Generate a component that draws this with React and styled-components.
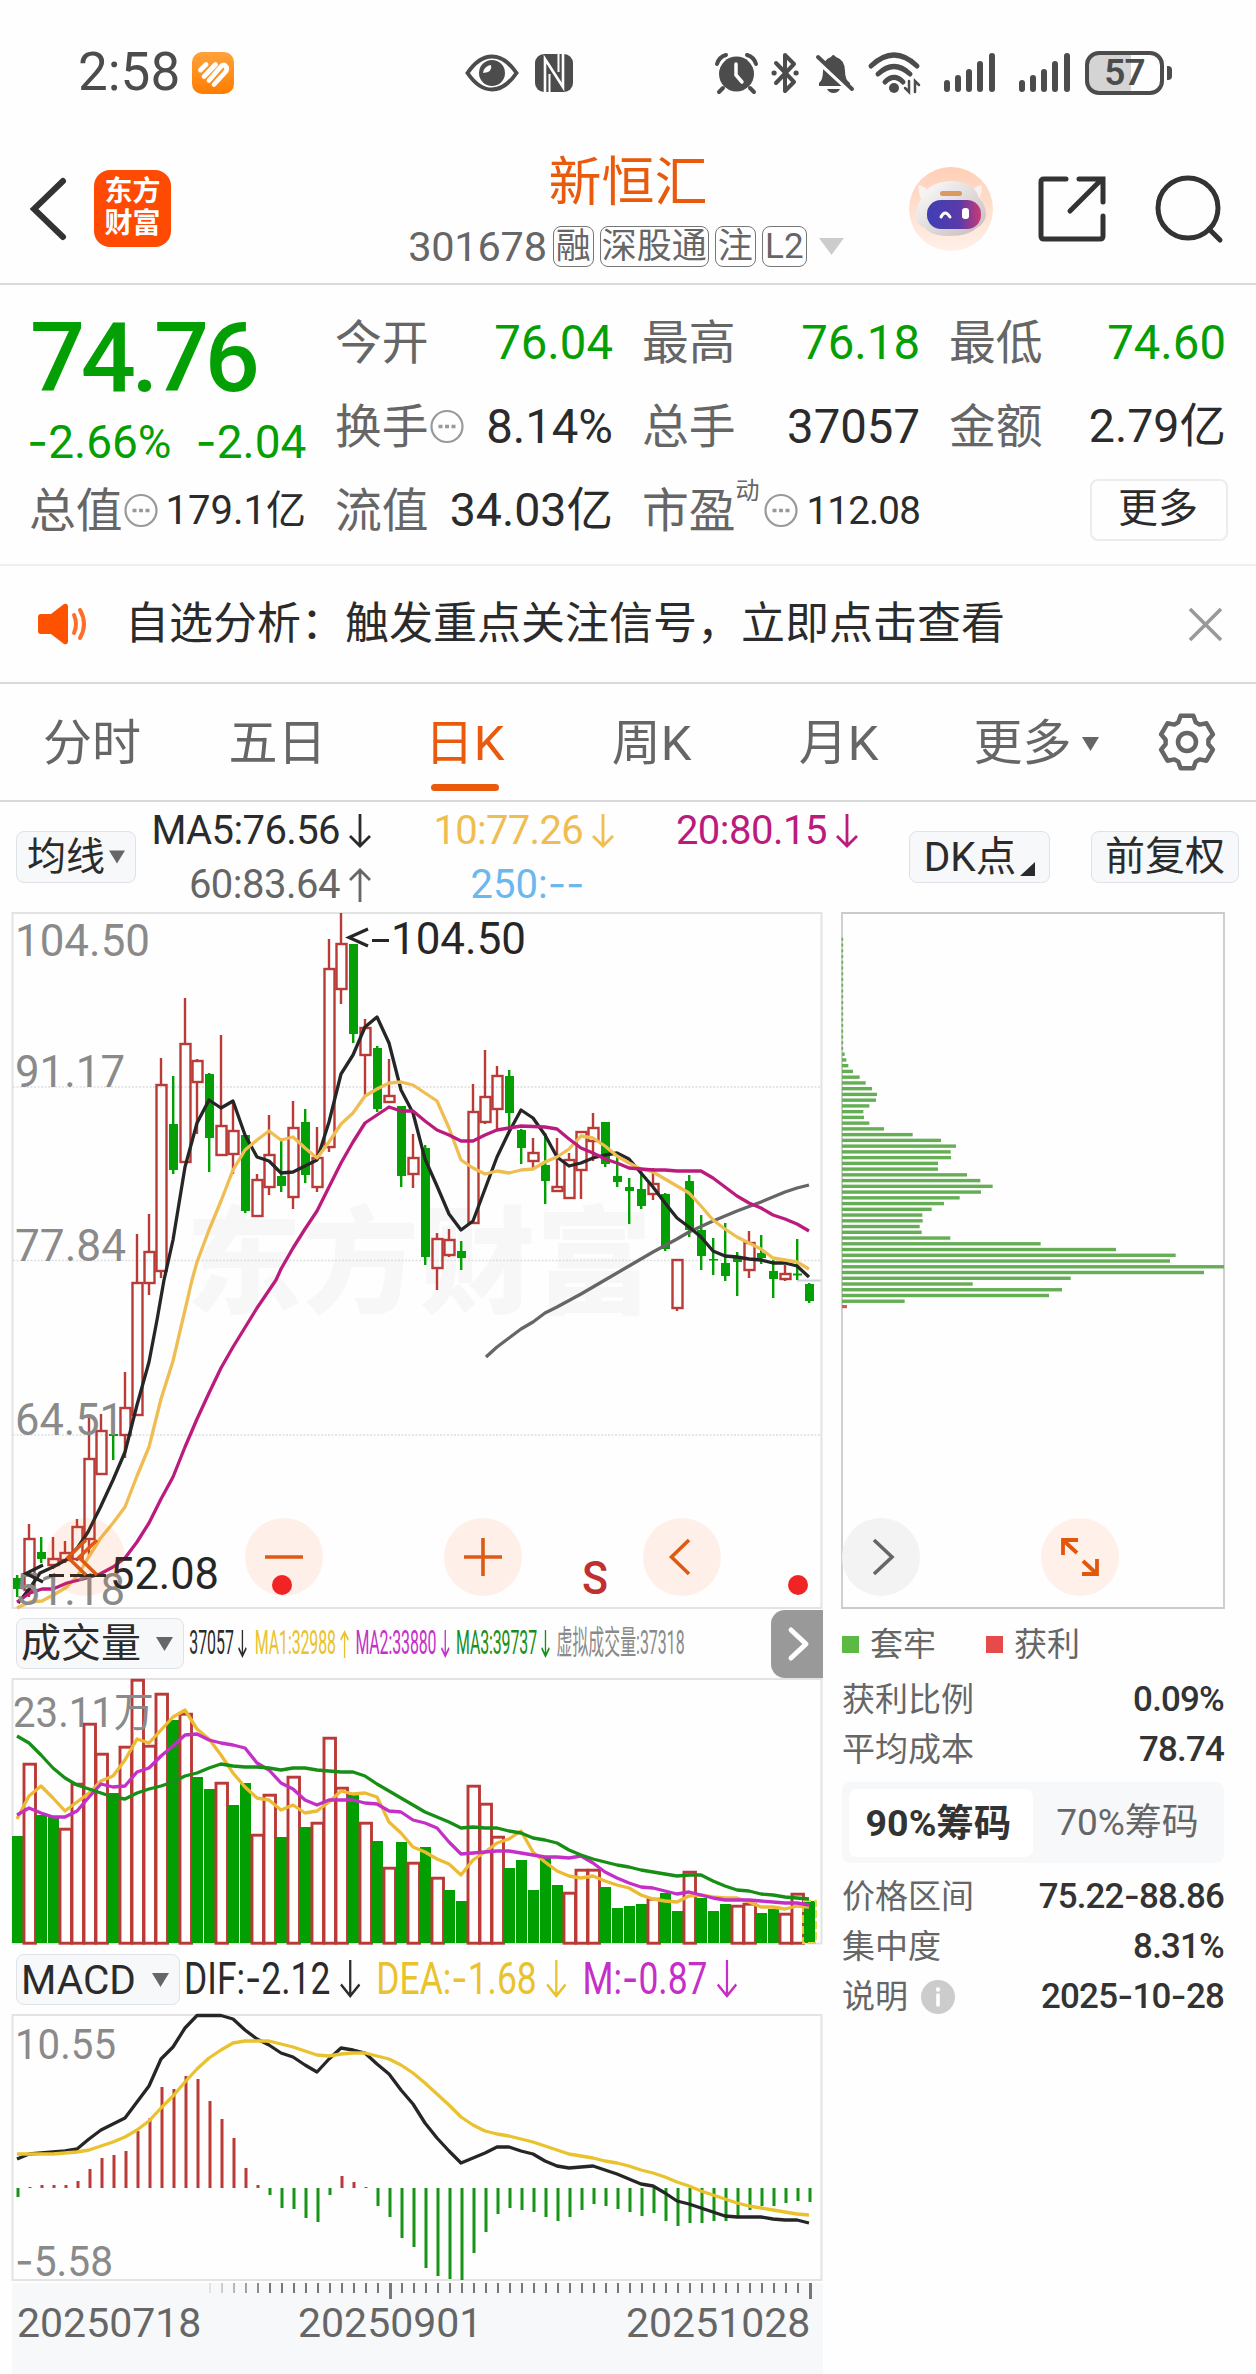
import React from 'react';
import styled, { createGlobalStyle } from 'styled-components';

const C = {
  orange: '#ea5a0c',
  green: '#049f04',
  red: '#b93a36',
  ink: '#2b2b2b',
  grey: '#666666',
  axis: '#8a8a8a',
  line: '#e3e3e3',
  yellow: '#efbd52',
  gold: '#e9c22d',
  magenta: '#bb1b7d',
  violet: '#c42fc8',
  deepGreen: '#178f17',
};
const FONT = 'Roboto, "Noto Sans CJK SC", sans-serif';

const Global = createGlobalStyle`
  html, body { margin: 0; padding: 0; background: #fefefe; }
  * { box-sizing: border-box; }
  body { font-family: ${FONT}; color: ${C.ink}; }
  svg { display: block; flex: none; overflow: visible; }
`;

/* ---------- shared pieces ---------- */
const Screen = styled.div`
  width: 1256px;
  height: 2374px;
  overflow: hidden;
  background: #fefefe;
`;
const Text = styled.span`
  display: block;
  flex: none;
  white-space: nowrap;
  line-height: 1.2;
  font-size: ${(p) => p.$s}px;
  color: ${(p) => p.$c || C.ink};
  font-weight: ${(p) => p.$w || 400};
  letter-spacing: ${(p) => p.$ls || 0}px;
`;
const Dash = styled.span`
  font-family: Inter, sans-serif;
  line-height: 0;
`;
/* Hyphens use the wider Inter glyph so that minus signs stay legible. */
function T({ children, ...rest }) {
  const parts = String(children).split('-');
  return (
    <Text {...rest}>
      {parts.map((p, i) => (
        <React.Fragment key={i}>{i > 0 && <Dash>-</Dash>}{p}</React.Fragment>
      ))}
    </Text>
  );
}
const Row = styled.div`
  display: flex;
  align-items: center;
  gap: ${(p) => p.$gap || 0}px;
`;

function Arrow({ up, color, w = 22, h = 34, sw = 2.8 }) {
  const m = w / 2;
  const d = up
    ? `M${m} ${h}V2M1 ${m + 1}L${m} 2L${w - 1} ${m + 1}`
    : `M${m} 0V${h - 2}M1 ${h - m - 1}L${m} ${h - 2}L${w - 1} ${h - m - 1}`;
  return (
    <svg width={w} height={h} viewBox={`0 0 ${w} ${h}`} fill="none" stroke={color} strokeWidth={sw}>
      <path d={d} />
    </svg>
  );
}
const Caret = ({ w = 17, h = 14, color = '#666' }) => (
  <svg width={w} height={h} viewBox="0 0 17 14"><path d="M0 0H17L8.5 14Z" fill={color} /></svg>
);

/* ---------- status bar ---------- */
const StatusBar = styled.div`
  display: flex;
  align-items: center;
  height: 134px;
  padding: 12px 84px 0 78px;
`;
const AppBadge = styled.div`
  margin-left: 12px;
`;
const Middle = styled.div`
  display: flex;
  align-items: center;
  gap: 16px;
  margin-left: 231px;
  flex: 1;
`;
const Signals = styled.div`
  display: flex;
  gap: 22px;
  margin: 0 14px 0 11px;
`;
const Battery = styled.div`
  display: flex;
  align-items: center;
  justify-content: center;
  width: 79px;
  height: 44px;
  border: 4px solid #4c4c4c;
  border-radius: 14px;
  background: linear-gradient(90deg, #d4d4d4 0 59%, #fefefe 59%);
`;
const BatteryTip = styled.div`
  width: 5px;
  height: 14px;
  margin-left: 3px;
  border-radius: 0 4px 4px 0;
  background: #4c4c4c;
`;
const Signal = () => (
  <svg width="53" height="42" viewBox="0 0 53 42" stroke="#4c4c4c" strokeWidth="6" strokeLinecap="round">
    <path d="M4 31V37M15 26V37M26 20V37M37 12V37M49 4V37" />
  </svg>
);

function Status() {
  const k = '#4c4c4c';
  return (
    <StatusBar>
      <T $s={53} $c={k}>2:58</T>
      <AppBadge>
        <svg width="42" height="42" viewBox="0 0 42 42">
          <defs><linearGradient id="og" x1="0" y1="0" x2="0" y2="1"><stop offset="0" stopColor="#ffa23c" /><stop offset="1" stopColor="#ff7d00" /></linearGradient></defs>
          <rect width="42" height="42" rx="10" fill="url(#og)" />
          <path d="M8.500 18L14 12.500M12 24.500L23.500 12.500M17 28.500L29 14.500Q32 11.500 34 14.500Q36 17 33 20.500L22 32.500" fill="none" stroke="#fff" strokeWidth="4.800" strokeLinecap="round" strokeLinejoin="round" />
        </svg>
      </AppBadge>
      <Middle>
        <svg width="54" height="38" viewBox="0 0 54 38">
          <path d="M2.5 19C12 5 20 2.5 27 2.5S42 5 51.500 19C42 33 34 35.500 27 35.500S12 33 2.500 19Z" fill="none" stroke={k} strokeWidth="4" />
          <circle cx="27" cy="19" r="13" fill={k} />
          <path d="M18 19A9 9 0 0 1 26 11Q28 18 18 19Z" fill="#fefefe" />
        </svg>
        <svg width="38" height="38" viewBox="0 0 38 38">
          <rect width="38" height="38" rx="9" fill={k} />
          <path d="M10 38V5L28 33V0" fill="none" stroke="#fefefe" strokeWidth="2.600" />
          <path d="M14.500 38V20M23.500 0V18" stroke="#fefefe" strokeWidth="2" />
        </svg>
      </Middle>
      <svg width="43" height="42" viewBox="0 0 43 42">
        <circle cx="21.500" cy="22" r="17.500" fill={k} />
        <path d="M2 12Q4 5 11 3M41 12Q39 5 32 3M8 36L4 40M35 36L39 40" stroke={k} strokeWidth="4" strokeLinecap="round" fill="none" />
        <path d="M21 12V23L27 30" stroke="#fefefe" strokeWidth="3.500" fill="none" strokeLinecap="round" />
      </svg>
      <svg width="57" height="42" viewBox="-15 0 57 42" fill="none" stroke={k} strokeWidth="4" strokeLinecap="round" strokeLinejoin="round">
        <path d="M3 11L21 30L12 39V3L21 12L3 31" /><path d="M1 21H1.200M23 21H23.200" strokeWidth="5" />
      </svg>
      <svg width="38" height="42" viewBox="0 0 38 42">
        <path d="M4 34V31Q8 28 8 19Q8 7 16 5Q18 1 21 5Q30 8 30 19Q30 28 35 31V34Z" fill={k} />
        <path d="M12 37H25Q23 41 18.500 41T12 37Z" fill={k} />
        <path d="M0 7L36 40" stroke="#fefefe" strokeWidth="4" /><path d="M3 5L37 37" stroke={k} strokeWidth="4" strokeLinecap="round" />
      </svg>
      <svg width="79" height="42" viewBox="-15 0 79 42" fill="none" stroke={k} strokeWidth="5" strokeLinecap="round">
        <path d="M3 14Q26 -8 49 14M10 22Q26 7 42 22M17 30Q26 21 35 30" />
        <circle cx="26" cy="36" r="5" fill={k} stroke="none" />
        <path d="M41 29V40L37 36M47 40V29L51 33" strokeWidth="2.500" />
      </svg>
      <Signals><Signal /><Signal /></Signals>
      <Battery><T $s={37} $w={600} $c={k} $ls={-1}>57</T></Battery>
      <BatteryTip />
    </StatusBar>
  );
}

/* ---------- header ---------- */
const HeaderBar = styled.header`
  display: grid;
  grid-template-columns: 1fr auto 1fr;
  align-items: center;
  height: 151px;
  padding: 0 33px 0 30px;
  border-bottom: 2px solid #d9d9d9;
`;
const Logo = styled.div`
  display: flex;
  flex-direction: column;
  align-items: center;
  justify-content: center;
  width: 77px;
  height: 77px;
  border-radius: 16px;
  background: #ff4a04;
  color: #fff;
  font-weight: 700;
  font-size: 28px;
  line-height: 32px;
  padding-bottom: 2px;
`;
const TitleCol = styled.div`
  display: flex;
  flex-direction: column;
  align-items: center;
  gap: 6px;
  padding-top: 7px;
`;
const Title = styled(Row)`
  padding-left: 3px;
`;
const Tag = styled.span`
  display: flex;
  align-items: center;
  justify-content: center;
  width: ${(p) => p.$w}px;
  height: 41px;
  border: 1.5px solid #777;
  border-radius: 8px;
  font-size: 35px;
  line-height: 40px;
  color: ${C.grey};
  white-space: nowrap;
`;
const Actions = styled.div`
  display: flex;
  align-items: center;
  justify-content: flex-end;
`;

function Robot() {
  return (
    <svg width="84" height="84" viewBox="0 0 84 84">
      <defs>
        <linearGradient id="pe" x1="0" y1="0" x2="0" y2="1"><stop offset="0" stopColor="#ffcfb6" /><stop offset="1" stopColor="#fff0e8" /></linearGradient>
        <linearGradient id="vi" x1="0" y1="0" x2="1" y2="0"><stop offset="0" stopColor="#3f3fb4" /><stop offset=".6" stopColor="#5a3aa8" /><stop offset="1" stopColor="#c83a78" /></linearGradient>
        <linearGradient id="he" x1="0" y1="0" x2="1" y2="1"><stop offset="0" stopColor="#fff" /><stop offset="1" stopColor="#c4b9ba" /></linearGradient>
      </defs>
      <circle cx="42" cy="42" r="42" fill="url(#pe)" />
      <path d="M9 18Q14 18 20 24L13 34Q9 26 9 18ZM73 18Q68 18 63 24L70 32Q73 26 73 18Z" fill="#f8f1ef" />
      <path d="M7 50Q7 38 13 32Q18 15 42 14Q66 15 70 31Q77 37 77 48Q76 56 69 60Q60 69 41 69Q22 69 16 61Q8 58 7 50Z" fill="url(#he)" />
      <rect x="31" y="24" width="22" height="5" rx="2.500" fill="#d99a62" />
      <rect x="18" y="33" width="54" height="29" rx="14" fill="url(#vi)" />
      <path d="M32 50Q36 42 41 50" stroke="#fff" strokeWidth="3" fill="none" strokeLinecap="round" />
      <rect x="53" y="41" width="7" height="11" rx="3" fill="#fff" />
    </svg>
  );
}

function Header() {
  return (
    <HeaderBar>
      <Row $gap={27}>
        <svg width="37" height="62" viewBox="0 0 37 62" fill="none" stroke="#333" strokeWidth="6" strokeLinecap="round"><path d="M33 3L4 31L33 59" /></svg>
        <Logo><span>东方</span><span>财富</span></Logo>
      </Row>
      <TitleCol>
        <Title><T $s={53} $c={C.orange}>新恒汇</T></Title>
        <Row $gap={6}>
          <T $s={41.5} $c={C.grey} $ls={-0.2}>301678</T>
          <Tag $w={41}>融</Tag>
          <Tag $w={109}>深股通</Tag>
          <Tag $w={41}>注</Tag>
          <Tag $w={45}>L2</Tag>
          <svg width="32" height="17" viewBox="-6 0 32 17"><path d="M0 0H25L12.500 17Z" fill="#ccc" /></svg>
        </Row>
      </TitleCol>
      <Actions>
        <Robot />
        <svg width="162" height="68" viewBox="-45 0 162 68" fill="none" stroke="#333" strokeWidth="5">
          <path d="M28 4H6Q3 4 3 7V61Q3 64 6 64H62Q65 64 65 61V41M41 4H65V27M63 5L32 36" strokeLinecap="round" />
        </svg>
        <svg width="68" height="68" viewBox="0 0 68 68" fill="none" stroke="#333" strokeWidth="5" strokeLinecap="round">
          <circle cx="33" cy="33" r="30" /><path d="M54 54L65 65" />
        </svg>
      </Actions>
    </HeaderBar>
  );
}

/* ---------- quote ---------- */
const Quote = styled.section`
  display: grid;
  grid-template-columns: 276px 277px 277px 276px;
  grid-template-rows: repeat(3, 84px);
  column-gap: 30px;
  height: 281px;
  padding: 16px 30px 0;
  border-bottom: 2px solid #efefef;
`;
const PriceCell = styled.div`
  grid-row: span 2;
  display: grid;
  grid-template-rows: 115px 53px;
  align-items: center;
`;
const Change = styled(Row)`
  margin-left: -3px;
`;
const Cell = styled.div`
  display: flex;
  align-items: center;
  justify-content: space-between;
`;
const Name = styled.span`
  flex: none;
  margin: 0 -1px;
  font-size: 46.8px;
  line-height: 56px;
  color: ${C.grey};
`;
const Sup = styled.span`
  align-self: flex-start;
  margin: -6px 2px 0 1px;
  font-size: 24px;
  line-height: 28px;
  color: ${C.grey};
`;
const MoreButton = styled.button`
  width: 138px;
  height: 62px;
  margin: -3px -2px 0 auto;
  padding: 0 2px 2px 0;
  border: 2px solid #ececec;
  border-radius: 8px;
  background: #fefefe;
  font: 400 40px/54px ${FONT};
  color: ${C.ink};
`;
const Dots = () => (
  <svg width="35" height="35" viewBox="-2 1 35 35">
    <circle cx="17" cy="17.500" r="15.500" fill="none" stroke="#999" strokeWidth="2.200" />
    <path d="M8.500 17.500h4M15 17.500h4M21.500 17.500h4" stroke="#999" strokeWidth="3.600" />
  </svg>
);

function QuoteBoard() {
  return (
    <Quote>
      <PriceCell>
        <T $s={97} $w={500} $c={C.green} $ls={-4.4}>74.76</T>
        <Change $gap={24}>
          <T $s={46} $c={C.green}>-2.66%</T>
          <T $s={46} $c={C.green}>-2.04</T>
        </Change>
      </PriceCell>
      <Cell><Name>今开</Name><T $s={47.3} $c={C.green}>76.04</T></Cell>
      <Cell><Name>最高</Name><T $s={47.3} $c={C.green}>76.18</T></Cell>
      <Cell><Name>最低</Name><T $s={47.3} $c={C.green}>74.60</T></Cell>
      <Cell><Row><Name>换手</Name><Dots /></Row><T $s={47.3}>8.14%</T></Cell>
      <Cell><Name>总手</Name><T $s={47.3}>37057</T></Cell>
      <Cell><Name>金额</Name><T $s={46.5}>2.79亿</T></Cell>
      <Cell><Row><Name>总值</Name><Dots /></Row><T $s={40}>179.1亿</T></Cell>
      <Cell><Name>流值</Name><T $s={46.5}>34.03亿</T></Cell>
      <Cell><Row><Name>市盈</Name><Sup>动</Sup><Dots /></Row><T $s={38.5} $ls={-0.8}>112.08</T></Cell>
      <Cell><MoreButton>更多</MoreButton></Cell>
    </Quote>
  );
}

/* ---------- notice ---------- */
const NoticeBar = styled.section`
  display: flex;
  align-items: center;
  height: 118px;
  padding: 0 33px 0 38px;
  border-bottom: 2px solid #d9d9d9;
`;
const NoticeText = styled.div`
  flex: 1;
  padding-left: 37px;
  font-size: 44px;
  line-height: 54px;
  white-space: nowrap;
`;
function Notice() {
  return (
    <NoticeBar>
      <svg width="50" height="42" viewBox="0 0 50 42">
        <path d="M3 11H13L26 1Q30 0 30 4V38Q30 42 26 41L13 31H3Q0 31 0 28V14Q0 11 3 11Z" fill="#ff5200" />
        <path d="M36 12Q40 21 36 30M42 7Q50 21 42 35" fill="none" stroke="#ff6d28" strokeWidth="4" strokeLinecap="round" />
      </svg>
      <NoticeText>自选分析：触发重点关注信号，立即点击查看</NoticeText>
      <svg width="35" height="35" viewBox="0 0 35 35" stroke="#999" strokeWidth="3.600"><path d="M2 2L33 33M33 2L2 33" /></svg>
    </NoticeBar>
  );
}

/* ---------- tabs ---------- */
const TabBar = styled.nav`
  display: grid;
  grid-template-columns: 184px repeat(4, 187px) 208px 1fr;
  align-items: center;
  height: 118px;
  border-bottom: 2px solid #d9d9d9;
`;
const Tab = styled.div`
  position: relative;
  display: flex;
  align-items: center;
  justify-content: center;
  gap: 10px;
  height: 116px;
  padding-top: 4px;
  font-size: 49px;
  line-height: 58px;
  color: ${(p) => (p.$on ? C.orange : C.grey)};
  &::after {
    content: '';
    display: ${(p) => (p.$on ? 'block' : 'none')};
    position: absolute;
    left: 60px;
    bottom: 9px;
    width: 68px;
    height: 7px;
    border-radius: 4px;
    background: ${C.orange};
  }
`;
const gear = (() => {
  const pts = [];
  for (let i = 0; i < 6; i += 1) {
    const a = (i * 60 - 90) * (Math.PI / 180);
    [[-0.42, 21.500], [-0.24, 27], [0.24, 27], [0.42, 21.500]].forEach(([o, r]) => {
      pts.push(`${(30 + r * Math.cos(a + o)).toFixed(1)} ${(30 + r * Math.sin(a + o)).toFixed(1)}`);
    });
  }
  return `M${pts.join('L')}Z`;
})();
const GearCell = styled.div`
  padding-left: 17px;
`;
function Tabs() {
  return (
    <TabBar>
      <Tab>分时</Tab><Tab>五日</Tab><Tab $on>日K</Tab><Tab>周K</Tab><Tab>月K</Tab>
      <Tab>更多<Caret /></Tab>
      <GearCell>
        <svg width="60" height="60" viewBox="0 0 60 60" fill="none" stroke="#666" strokeWidth="4.500" strokeLinejoin="round">
          <path d={gear} /><circle cx="30" cy="30" r="9" />
        </svg>
      </GearCell>
    </TabBar>
  );
}

/* ---------- indicator toolbar ---------- */
const ToolBar = styled.div`
  display: flex;
  align-items: center;
  height: 109px;
  padding: 0 17px 0 16px;
`;
const Chip = styled.button`
  display: flex;
  align-items: center;
  justify-content: ${(p) => (p.$spread ? 'space-between' : 'center')};
  gap: 4px;
  flex: none;
  width: ${(p) => p.$w}px;
  height: ${(p) => p.$h || 52}px;
  margin: 0;
  padding: ${(p) => (p.$spread ? '0 10px 0 4px' : '0')};
  border: 1.5px solid #dfe2e6;
  border-radius: 8px;
  background: #f7f8fa;
  font: 400 ${(p) => p.$s || 39}px/46px ${FONT};
  color: ${C.ink};
  white-space: nowrap;
`;
const ChipPair = styled.div`
  display: flex;
  gap: 41px;
`;
const Averages = styled.div`
  display: grid;
  grid-template-columns: 219px 179px 180px;
  grid-template-rows: 54px 54px;
  column-gap: 64px;
  margin: 2px 0 0 16px;
  flex: 1;
`;
const Avg = styled.div`
  display: flex;
  align-items: center;
  justify-content: ${(p) => p.$j || 'flex-end'};
  padding-left: ${(p) => (p.$j ? 6 : 0)}px;
  gap: 9px;
`;
const Corner = () => (
  <svg width="15" height="14" viewBox="0 -12 15 14"><path d="M15 0V14H0Z" fill="#2b2b2b" /></svg>
);
function Toolbar() {
  return (
    <ToolBar>
      <Chip $w={120}>均线<Caret w={16} /></Chip>
      <Averages>
        <Avg><T $s={40} $ls={-0.6}>MA5:76.56</T><Arrow color={C.ink} /></Avg>
        <Avg><T $s={40} $c={C.yellow} $ls={-0.7}>10:77.26</T><Arrow color={C.yellow} /></Avg>
        <Avg><T $s={40} $c={C.magenta} $ls={-0.5}>20:80.15</T><Arrow color={C.magenta} /></Avg>
        <Avg><T $s={40} $c={C.grey} $ls={-0.5}>60:83.64</T><Arrow up color={C.grey} /></Avg>
        <Avg $j="center"><T $s={40} $c="#6cb8ec">250:--</T></Avg>
      </Averages>
      <ChipPair>
        <Chip $w={141} $s={40.5}>DK点<Corner /></Chip>
        <Chip $w={148} $s={40}>前复权</Chip>
      </ChipPair>
    </ToolBar>
  );
}

/* ---------- chart data ---------- */
const X = (i) => 17 + 12 * i;
// [rising, high, bodyTop, bodyBottom, low]
const candles = [
  [0, 1575, 1578, 1589, 1597], [1, 1524, 1539, 1590, 1597], [0, 1537, 1552, 1559, 1563], [1, 1537, 1559, 1565, 1569],
  [1, 1541, 1553, 1560, 1563], [1, 1519, 1527, 1559, 1561], [1, 1418, 1459, 1539, 1557], [1, 1414, 1431, 1474, 1475],
  [0, 1425, 1434, 1436, 1460], [1, 1372, 1408, 1435, 1458], [1, 1234, 1283, 1415, 1415], [1, 1214, 1252, 1283, 1295],
  [1, 1058, 1085, 1271, 1278], [0, 1076, 1124, 1170, 1174], [1, 998, 1044, 1162, 1162], [1, 1059, 1061, 1082, 1134],
  [0, 1073, 1074, 1138, 1172], [1, 1035, 1126, 1155, 1155], [1, 1102, 1131, 1154, 1174], [0, 1135, 1135, 1211, 1213],
  [1, 1174, 1180, 1216, 1216], [1, 1115, 1155, 1187, 1195], [0, 1138, 1176, 1186, 1192], [1, 1101, 1128, 1197, 1209],
  [0, 1109, 1122, 1175, 1183], [1, 1127, 1158, 1187, 1192], [1, 939, 969, 1147, 1152], [1, 913, 944, 989, 1004],
  [0, 944, 944, 1034, 1043], [1, 1019, 1028, 1055, 1097], [0, 1046, 1048, 1109, 1112], [1, 1059, 1096, 1102, 1102],
  [0, 1106, 1106, 1176, 1187], [1, 1134, 1158, 1174, 1188], [0, 1145, 1148, 1257, 1265], [1, 1233, 1239, 1268, 1290],
  [1, 1229, 1240, 1255, 1257], [0, 1241, 1251, 1258, 1270], [1, 1084, 1112, 1223, 1223], [1, 1050, 1097, 1122, 1124],
  [1, 1066, 1076, 1109, 1129], [0, 1070, 1076, 1113, 1130], [0, 1129, 1130, 1148, 1164], [1, 1138, 1153, 1161, 1168],
  [0, 1133, 1165, 1181, 1204], [1, 1138, 1187, 1191, 1191], [1, 1153, 1160, 1198, 1198], [1, 1132, 1132, 1170, 1199],
  [1, 1113, 1128, 1141, 1161], [0, 1122, 1122, 1164, 1167], [0, 1153, 1176, 1182, 1187], [0, 1178, 1187, 1191, 1224],
  [0, 1171, 1189, 1206, 1209], [1, 1168, 1184, 1194, 1200], [0, 1193, 1194, 1249, 1251], [1, 1260, 1260, 1308, 1311],
  [0, 1175, 1181, 1230, 1237], [0, 1215, 1230, 1256, 1270], [0, 1238, 1259, 1260.5, 1275], [0, 1223, 1263, 1276, 1281],
  [0, 1252, 1258, 1262, 1296], [1, 1231, 1243, 1270, 1278], [0, 1235, 1253, 1258, 1264], [0, 1260, 1271, 1279, 1298],
  [1, 1265, 1274, 1279, 1281], [0, 1239, 1273.5, 1275.5, 1280], [0, 1283, 1284, 1301, 1303],
];
const ma5 = '18,1603 30,1588 40,1573 53,1567 66,1560 78,1547 88,1532 100,1508 113,1480 125,1452 137,1405 149,1362 157,1320 164,1280 173,1240 185,1167 197,1123 209,1100 221,1108 233,1101 245,1135 257,1157 269,1161 281,1173 293,1172 305,1166 317,1160 329,1122 341,1074 353,1055 365,1027 377,1017 389,1043 401,1090 413,1113 425,1159 437,1186 449,1214 461,1230 473,1221 485,1189 497,1157 509,1132 521,1110 533,1118 545,1135 557,1157 569,1166 581,1163 593,1158 605,1155 617,1153 629,1159 641,1173 653,1187 665,1203 677,1218 689,1227 701,1237 713,1251 725,1256 737,1257 749,1259 761,1260 773,1263 785,1263 797,1266 809,1277';
const ma10 = '17,1608 30,1602 42,1601 55,1594 67,1587 78,1575 88,1558 100,1539 113,1523 125,1507 137,1476 149,1447 161,1399 173,1361 185,1310 192,1280 197,1262 209,1230 221,1201 233,1170 245,1150 257,1140 269,1131 281,1140 293,1137 305,1148 317,1158 329,1142 341,1124 353,1113 365,1096 377,1089 389,1083 401,1082 413,1085 425,1093 437,1101 449,1128 461,1160 473,1168 485,1174 497,1171 509,1173 521,1170 533,1169 545,1162 557,1157 569,1149 581,1136 593,1138 605,1146 617,1156 629,1163 641,1169 653,1172 689,1193 701,1206 713,1220 725,1229 737,1237 749,1243 761,1249 773,1258 785,1260 797,1262 809,1269';
const ma20 = '17,1602 30,1593 42,1589 53,1589 67,1583 83,1579 100,1574 113,1567 125,1558 137,1542 149,1523 161,1499 173,1477 185,1447 197,1419 209,1393 221,1368 233,1347 257,1308 276,1280 281,1269 293,1248 305,1229 317,1211 341,1163 353,1142 365,1123 377,1115 389,1107 401,1111 413,1111 425,1121 437,1130 449,1135 461,1141 473,1141 485,1135 497,1130 509,1128 521,1126 545,1127 557,1129 569,1139 581,1148 593,1153 605,1159 617,1163 629,1168 653,1170 665,1170 677,1171 701,1171 713,1178 725,1187 737,1196 749,1203 761,1208 773,1215 785,1219 797,1224 809,1231';
const ma60 = '486,1357 497,1347 509,1338 521,1329 533,1322 545,1313 557,1307 581,1294 605,1280 629,1266 653,1252 677,1239 689,1232 713,1221 737,1211 761,1202 785,1192 797,1188 809,1185';

const volTop = [1836, 1763, 1815, 1817, 1828, 1783, 1723, 1753, 1793, 1746, 1679, 1745, 1693, 1720, 1713, 1777, 1789, 1782, 1805, 1783, 1834, 1794, 1837, 1776, 1827, 1822, 1737, 1787, 1795, 1822, 1841, 1867, 1842, 1862, 1847, 1877, 1890, 1901, 1785, 1803, 1836, 1868, 1860, 1890, 1858, 1885, 1892, 1869, 1869, 1887, 1908, 1906, 1904, 1898, 1893, 1911, 1871, 1898, 1911, 1904, 1905, 1903, 1913, 1909, 1913, 1893, 1901];
const volRed = new Set([1, 4, 5, 6, 7, 9, 10, 11, 12, 14, 17, 20, 21, 23, 25, 26, 27, 29, 31, 33, 35, 38, 39, 40, 46, 47, 48, 53, 56, 60, 61, 64, 65]);
const vol1 = [1819, 1796, 1786, 1798, 1811, 1802, 1793, 1781, 1776, 1760, 1739, 1743, 1730, 1717, 1710, 1729, 1739, 1755, 1773, 1787, 1798, 1800, 1810, 1805, 1813, 1811, 1802, 1791, 1794, 1793, 1797, 1822, 1833, 1847, 1852, 1859, 1864, 1875, 1860, 1852, 1843, 1839, 1831, 1852, 1862, 1871, 1876, 1878, 1876, 1881, 1885, 1888, 1895, 1899, 1901, 1902, 1896, 1895, 1897, 1898, 1898, 1902, 1907, 1907, 1909, 1906, 1907];
const vol2 = [1815, 1808, 1813, 1817, 1817, 1811, 1797, 1784, 1787, 1786, 1772, 1768, 1756, 1746, 1735, 1734, 1740, 1743, 1745, 1748, 1763, 1770, 1783, 1789, 1800, 1805, 1800, 1800, 1800, 1803, 1804, 1811, 1812, 1820, 1823, 1828, 1842, 1854, 1853, 1852, 1851, 1851, 1853, 1855, 1857, 1857, 1858, 1856, 1863, 1872, 1878, 1883, 1887, 1888, 1891, 1894, 1892, 1895, 1898, 1900, 1900, 1900, 1901, 1902, 1903, 1903, 1905];
const vol3 = [1736, 1743, 1755, 1768, 1778, 1785, 1789, 1793, 1797, 1799, 1793, 1789, 1786, 1782, 1776, 1773, 1768, 1764, 1766, 1767, 1767, 1768, 1770, 1768, 1768, 1770, 1771, 1772, 1772, 1776, 1784, 1791, 1798, 1805, 1812, 1817, 1822, 1828, 1827, 1828, 1828, 1831, 1833, 1838, 1840, 1843, 1850, 1855, 1859, 1862, 1865, 1867, 1870, 1872, 1874, 1876, 1875, 1875, 1881, 1886, 1890, 1891, 1894, 1895, 1897, 1898, 1899];

const macd = [-9, 1, 3, 3, 3, 7, 19, 30, 33, 37, 57, 70, 101, 99, 112, 109, 87, 69, 50, 20, 3, -7, -20, -21, -30, -34, -7, 12, 6, 1, -18, -29, -50, -59, -80, -88, -91, -92, -65, -44, -26, -20, -22, -24, -29, -33, -29, -22, -16, -18, -21, -24, -28, -25, -33, -38, -35, -35, -33, -33, -29, -22, -18, -18, -15, -13, -14];
const dif = [2159, 2154, 2153, 2152, 2151, 2149, 2139, 2130, 2124, 2118, 2102, 2086, 2059, 2047, 2028, 2015.5, 2015.5, 2015.5, 2019, 2030, 2039, 2045, 2053, 2057, 2065, 2072, 2059, 2048, 2050, 2053, 2064, 2074, 2090, 2104, 2123, 2138, 2151, 2163, 2158, 2153, 2147, 2147, 2151, 2154, 2161, 2166, 2168, 2167, 2166, 2170, 2174, 2179, 2184, 2186, 2193, 2201, 2204, 2208, 2212, 2216, 2217, 2217, 2217, 2219, 2220, 2220, 2223];
const dea = [2154, 2154, 2154, 2154, 2153, 2152, 2150, 2146, 2142, 2137, 2130, 2121, 2108, 2096, 2082, 2069, 2058, 2050, 2043, 2041, 2041, 2041, 2044, 2047, 2051, 2055, 2056, 2054, 2053, 2053, 2056, 2059, 2065, 2073, 2083, 2094, 2105, 2117, 2125, 2131, 2134, 2136, 2139, 2142, 2146, 2150, 2154, 2156, 2158, 2161, 2163, 2166, 2170, 2173, 2177, 2182, 2186, 2191, 2195, 2199, 2203, 2206, 2208, 2210, 2212, 2214, 2215];
const chipEnds = [44, 49, 55, 69, 89, 107, 126, 141, 138, 118, 100, 102, 118, 162, 248, 333, 378, 362, 363, 324, 324, 411, 451, 488, 453, 389, 342, 305, 277, 278, 269, 275, 361, 632, 858, 1037, 1020, 1182, 1122, 722, 428, 696, 657, 224];
const series = (ys) => ys.map((y, i) => `${X(i)},${y}`).join(' ');

/* ---------- chart drawing ---------- */
const Line = ({ pts, c, w = 3.3 }) => (
  <polyline points={pts} fill="none" stroke={c} strokeWidth={w} strokeLinejoin="round" />
);
const Lab = ({ x, y, w, s = 45, c = C.axis, weight = 400, children }) => (
  <text x={x} y={y} fontFamily={FONT} fontSize={s} fontWeight={weight} fill={c} textLength={w} lengthAdjust="spacingAndGlyphs">{children}</text>
);
const Frame = ({ y, h }) => (
  <rect x="12.500" y={y} width="809" height={h} fill="none" stroke={C.line} strokeWidth="2" />
);

function PriceChart() {
  return (
    <svg width="811" height="698" viewBox="12 911 811 698">
      <text x="186" y="1304" fontFamily={FONT} fontSize="116" fontWeight="900" fill="#f7f7f7" textLength="466">东方财富</text>
      {[1087, 1260.500, 1435].map((y) => <path key={y} d={`M13 ${y}H821`} stroke="#dedede" strokeWidth="1.500" strokeDasharray="2 1.500" />)}
      <path d="M797 1280.500H821" stroke="#ccd2da" strokeWidth="2" />
      <Frame y={913} h={695} />
      {candles.map(([up, h, t, b, l], i) => {
        const x = X(i);
        return up ? (
          <g key={i} stroke={C.red} strokeWidth="2.400" fill="none">
            <path d={`M${x} ${h}V${t}M${x} ${b}V${l}`} />
            <rect x={x - 4.500} y={t} width="10" height={Math.max(b - t, 2)} />
          </g>
        ) : (
          <g key={i} fill={C.green}>
            <rect x={x - 1} y={h} width="2.400" height={l - h} />
            <rect x={x - 4} y={t} width="9" height={b - t} />
          </g>
        );
      })}
      <Line pts={ma60} c="#666" />
      <Line pts={ma5} c="#262626" />
      <Line pts={ma10} c={C.yellow} />
      <Line pts={ma20} c={C.magenta} />
      <Lab x={15} y={956} w={135}>104.50</Lab>
      <Lab x={15} y={1087} w={110}>91.17</Lab>
      <Lab x={15} y={1261} w={111}>77.84</Lab>
      <Lab x={15} y={1435} w={109}>64.51</Lab>
      <Lab x={15} y={1605} w={110}>51.18</Lab>
      <path d="M368 929L349 937.500L368 946M372 940.500H389" fill="none" stroke="#262626" strokeWidth="3.200" />
      <Lab x={391} y={954} w={135} c="#262626">104.50</Lab>
      <path d="M43 1565L26 1573.500L43 1582M49 1575.500H64M70 1575.500H106" fill="none" stroke="#262626" strokeWidth="3.200" />
      <Lab x={110} y={1589} w={109} c="#262626">52.08</Lab>
      <Lab x={582} y={1594} w={26} s={46} weight={500} c="#c03030">S</Lab>
      {[85.500, 284, 483, 682].map((cx) => <circle key={cx} cx={cx} cy="1557" r="39" fill="#ff5a00" fillOpacity=".085" />)}
      <g fill="none" stroke="#dd5a14" strokeWidth="3.600">
        <path d="M86 1540L68 1557.500L86 1575M97 1540L79 1557.500L97 1575" />
        <path d="M265 1557H303M464 1557H502M483 1538V1576M689 1540L671.500 1557L689 1574" />
      </g>
      <circle cx="282" cy="1585" r="10" fill="#f02424" />
      <circle cx="798" cy="1585" r="10" fill="#f02424" />
    </svg>
  );
}

function VolumeChart() {
  return (
    <svg width="811" height="267" viewBox="12 1678 811 267">
      <Frame y={1679} h={264.500} />
      {volTop.map((t, i) => (volRed.has(i)
        ? <rect key={i} x={X(i) - 5} y={t + 1.200} width="11.500" height={1942 - t} fill="#fefefe" stroke={C.red} strokeWidth="2.900" />
        : <rect key={i} x={X(i) - 5} y={t} width="11" height={1943 - t} fill="#029f02" />))}
      <rect x="803" y="1901" width="13" height="42" fill="none" stroke="#e5d23c" strokeWidth="1.800" strokeDasharray="8 3" />
      <Line pts={series(vol1)} c="#edbb33" />
      <Line pts={series(vol2)} c={C.violet} />
      <Line pts={series(vol3)} c={C.deepGreen} />
      <Lab x={13} y={1727} w={141} s={42}>23.11万</Lab>
    </svg>
  );
}

function MacdChart() {
  return (
    <svg width="811" height="268" viewBox="12 2014 811 268">
      <Frame y={2015} h={265} />
      {macd.map((v, i) => (
        <rect key={i} x={X(i) - 0.5} y={v > 0 ? 2188 - v : 2188} width="3" height={Math.abs(v)} fill={v > 0 ? C.red : '#179417'} />
      ))}
      <Line pts={series(dif)} c="#262626" />
      <Line pts={series(dea)} c={C.gold} />
      <Lab x={15} y={2059} w={101} s={42}>10.55</Lab>
      <Lab x={15} y={2276} w={98} s={42}><tspan fontFamily="Inter">-</tspan>5.58</Lab>
    </svg>
  );
}

/* ---------- lower layout ---------- */
const Body = styled.main`
  display: grid;
  grid-template-columns: 811px 383px;
  column-gap: 18px;
  padding-left: 12px;
`;
const Column = styled.div`
  display: flex;
  flex-direction: column;
`;
const StudyBar = styled.div`
  display: flex;
  align-items: center;
  height: 69px;
  padding-left: 4px;
`;
const Narrow = styled.div`
  display: flex;
  align-items: center;
  flex: none;
  width: 580px;
  gap: 14px;
  padding-left: 11px;
  transform: scaleX(0.475);
  transform-origin: left center;
`;
const Reading = styled.div`
  display: flex;
  align-items: center;
  gap: 9px;
  margin-right: ${(p) => p.$mr || 0}px;
`;
const Next = styled.button`
  display: flex;
  align-items: center;
  justify-content: center;
  flex: none;
  width: 52px;
  height: 68px;
  margin: 0 0 0 auto;
  padding: 0 0 0 3px;
  border: 0;
  border-radius: 14px 0 0 14px;
  background: #999;
`;
const DateAxis = styled.div`
  height: 92px;
  margin-top: 1px;
  background: #f7f8fa;
`;
const Dates = styled.div`
  display: grid;
  grid-template-columns: 281px 328px auto;
  padding-left: 5px;
  margin-top: -1px;
`;
const MacdRow = styled.div`
  display: flex;
  align-items: center;
  flex: none;
  gap: 20px;
  margin-left: 4px;
  transform: scaleX(0.805);
  transform-origin: left center;
`;
const MacdItem = styled(Reading)`
  gap: 12px;
`;

function Charts() {
  return (
    <Column>
      <PriceChart />
      <StudyBar>
        <Chip $w={168} $h={51} $s={40} $spread>成交量<Caret /></Chip>
        <Narrow>
          <Reading $mr={3}><T $s={33.5}>37057</T><Arrow w={18} h={28} color={C.ink} /></Reading>
          <Reading><T $s={33.5} $ls={-0.2} $c={C.gold}>MA1:32988</T><Arrow up w={18} h={28} color={C.gold} /></Reading>
          <Reading><T $s={33.5} $ls={-0.2} $c={C.violet}>MA2:33880</T><Arrow w={18} h={28} color={C.violet} /></Reading>
          <Reading><T $s={33.5} $ls={-0.2} $c={C.deepGreen}>MA3:39737</T><Arrow w={18} h={28} color={C.deepGreen} /></Reading>
          <T $s={33.5} $c={C.axis}>虚拟成交量:37318</T>
        </Narrow>
        <Next>
          <svg width="22" height="34" viewBox="0 0 22 34" fill="none" stroke="#fff" strokeWidth="5" strokeLinecap="round" strokeLinejoin="round"><path d="M3 3L18 17L3 31" /></svg>
        </Next>
      </StudyBar>
      <VolumeChart />
      <StudyBar>
        <Chip $w={164} $h={51} $s={40.5} $spread>MACD<Caret /></Chip>
        <MacdRow>
          <MacdItem><T $s={44}>DIF:-2.12</T><Arrow w={25} h={38} color={C.ink} /></MacdItem>
          <MacdItem><T $s={44} $c={C.gold}>DEA:-1.68</T><Arrow w={25} h={38} color={C.gold} /></MacdItem>
          <MacdItem><T $s={44} $c={C.violet}>M:-0.87</T><Arrow w={25} h={38} color={C.violet} /></MacdItem>
        </MacdRow>
      </StudyBar>
      <MacdChart />
      <DateAxis>
        <svg width="811" height="17" viewBox="12 0 811 17">
          {volTop.map((_, i) => {
            const long = i === 31 || i === 66;
            return i < 16 ? null : (
              <rect key={i} x={X(i)} y="0" width={long ? 3 : 2} height={long ? 16 : 10} fill="#777" opacity={Math.min(1, (i - 15) / 6)} />
            );
          })}
        </svg>
        <Dates>
          <T $s={41} $c={C.grey}>20250718</T><T $s={41} $c={C.grey}>20250901</T><T $s={41} $c={C.grey}>20251028</T>
        </Dates>
      </DateAxis>
    </Column>
  );
}

/* ---------- chip distribution ---------- */
const Legend = styled.div`
  display: flex;
  align-items: center;
  gap: 11px;
  height: 66px;
  padding: 5px 0 0 1px;
`;
const Square = styled.i`
  width: 17px;
  height: 17px;
  margin-left: ${(p) => p.$ml || 0}px;
  background: ${(p) => p.$c};
`;
const Stat = styled.div`
  display: flex;
  align-items: center;
  justify-content: space-between;
  height: 50px;
  padding-left: 1px;
`;
const Segment = styled.div`
  display: grid;
  grid-template-columns: 184px 1fr;
  align-items: center;
  height: 81px;
  margin: 7px 0 9px 1px;
  padding: 6px 7px;
  border-radius: 8px;
  background: #f7f8fa;
`;
const SegItem = styled.div`
  display: flex;
  align-items: center;
  justify-content: center;
  height: 68px;
  border-radius: 8px;
  background: ${(p) => (p.$on ? '#ffffff' : 'transparent')};
  font-size: ${(p) => (p.$on ? 37.5 : 37)}px;
  line-height: 44px;
  font-weight: ${(p) => (p.$on ? 700 : 400)};
  color: ${(p) => (p.$on ? '#333' : C.grey)};
  padding: ${(p) => (p.$on ? '0 5px 0 0' : '0 0 0 5px')};
`;
const Value = ({ children }) => <T $s={34.9} $w={500} $c="#333" $ls={-0.8}>{children}</T>;

function ChipPanel() {
  const y0 = 1054.200;
  const tiny = Array.from({ length: 20 }, (_, k) => y0 - 5.745 * (k + 1));
  return (
    <Column>
      <svg width="384" height="698" viewBox="841 911 384 698">
        <path d="M842 1608V913H1224V1608Z" fill="none" stroke="#cbcbcb" strokeWidth="1.800" />
        {tiny.map((y) => <rect key={y} x="841.500" y={y - 1.500} width="1.700" height="3" fill="#6aae58" />)}
        {chipEnds.map((e, k) => <rect key={k} x="842" y={y0 + 5.745 * k - 1.700} width={(e - 36) / 3} height="3.400" fill="#66ae55" />)}
        <rect x="842" y="1305" width="5" height="3.200" fill="#c8605c" />
        <circle cx="881" cy="1557" r="39" fill="#f3f3f3" />
        <path d="M874 1540L892 1557L874 1574" fill="none" stroke="#666" strokeWidth="3.600" />
        <circle cx="1080" cy="1557" r="39" fill="#fff1e9" />
        <path d="M1078 1540H1063V1555M1063 1540L1077 1553M1082 1574H1097V1559M1097 1574L1083 1561" fill="none" stroke="#e2570c" strokeWidth="3.800" />
      </svg>
      <Legend>
        <Square $c="#5cb944" /><T $s={33} $c={C.grey}>套牢</T>
        <Square $c="#e64a49" $ml={39} /><T $s={33} $c={C.grey}>获利</T>
      </Legend>
      <Stat><T $s={33} $c={C.grey}>获利比例</T><Value>0.09%</Value></Stat>
      <Stat><T $s={33} $c={C.grey}>平均成本</T><Value>78.74</Value></Stat>
      <Segment><SegItem $on>90%筹码</SegItem><SegItem>70%筹码</SegItem></Segment>
      <Stat><T $s={33} $c={C.grey}>价格区间</T><Value>75.22-88.86</Value></Stat>
      <Stat><T $s={33} $c={C.grey}>集中度</T><Value>8.31%</Value></Stat>
      <Stat>
        <Row $gap={13}>
          <T $s={33} $c={C.grey}>说明</T>
          <svg width="34" height="34" viewBox="0 0 34 34"><circle cx="17" cy="17" r="17" fill="#ccc" /><path d="M17 15V25" stroke="#fff" strokeWidth="3.600" strokeLinecap="round" /><circle cx="17" cy="9.500" r="2.200" fill="#fff" /></svg>
        </Row>
        <Value>2025-10-28</Value>
      </Stat>
    </Column>
  );
}

export default function App() {
  return (
    <Screen>
      <Global />
      <Status />
      <Header />
      <QuoteBoard />
      <Notice />
      <Tabs />
      <Toolbar />
      <Body>
        <Charts />
        <ChipPanel />
      </Body>
    </Screen>
  );
}
